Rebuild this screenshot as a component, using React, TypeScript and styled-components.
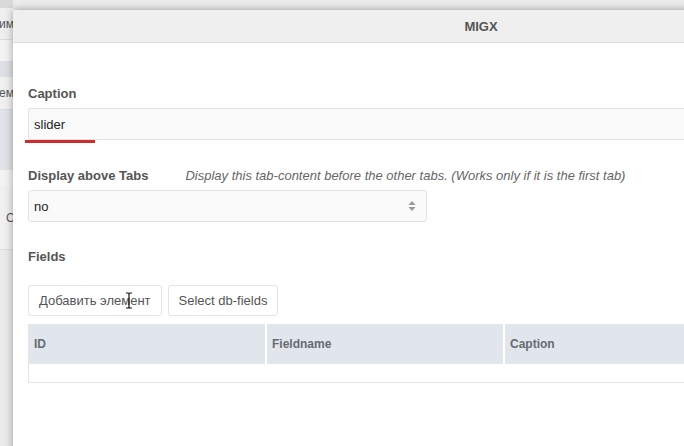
import styled, { createGlobalStyle } from "styled-components";

const GlobalStyle = createGlobalStyle`
    html, body {
        margin: 0;
        padding: 0;
        width: 684px;
        height: 446px;
        overflow: hidden;
        background: #ececec;
        font-family: "Liberation Sans", Arial, sans-serif;
    }
`;

const Screen = styled.div`
    position: relative;
    width: 684px;
    height: 446px;
    overflow: hidden;
    background: #ececec;
`;

// page behind the window, only a sliver of it shows on the left
const BackPage = styled.div`
    display: flex;
    flex-direction: column;
    width: 13px;
    height: 446px;
    background: #ebebeb;
    overflow: hidden;
`;

const BackRow = styled.div<{ h: number; bg: string; line?: boolean }>`
    height: ${({ h }) => h}px;
    flex-shrink: 0;
    background: ${({ bg }) => bg};
    border-bottom: ${({ line }) => (line ? "1px solid #dcdcdc" : "none")};
    display: flex;
    align-items: center;
    font-size: 12px;
    color: #555;
    white-space: nowrap;
    overflow: hidden;
    box-sizing: border-box;
`;

const BackText = styled.span<{ shift: number }>`
    margin-left: ${({ shift }) => shift}px;
`;

const Window = styled.div`
    position: absolute;
    left: 13px;
    top: 10px;
    width: 936px;
    height: 460px;
    background: #fff;
    box-shadow: 0 0 8px rgba(0, 0, 0, 0.35);
    display: flex;
    flex-direction: column;
`;

const WindowHeader = styled.div`
    height: 33px;
    background: #efefef;
    border-bottom: 1px solid #dedede;
    display: flex;
    align-items: center;
    justify-content: center;
    font-size: 13px;
    font-weight: bold;
    color: #555;
    box-sizing: border-box;
`;

const Body = styled.div`
    padding: 43px 15px 0 15px;
    display: flex;
    flex-direction: column;
`;

const LabelRow = styled.div`
    display: flex;
    align-items: baseline;
    gap: 37px;
    height: 16px;
    margin-bottom: 6px;
`;

const Label = styled.label`
    font-size: 13px;
    font-weight: bold;
    color: #555;
`;

const Hint = styled.span`
    font-size: 13px;
    font-style: italic;
    color: #666;
`;

const TextInput = styled.div`
    position: relative;
    height: 32px;
    box-sizing: border-box;
    background: #fafafa;
    border: 1px solid #e2e2e2;
    border-radius: 2px;
    display: flex;
    align-items: center;
    padding-left: 5px;
    font-size: 13px;
    color: #222;
`;

const FocusBar = styled.div`
    position: absolute;
    left: -4px;
    bottom: -4px;
    width: 70px;
    height: 3px;
    background: #d02b2b;
`;

const Section = styled.div<{ top: number }>`
    margin-top: ${({ top }) => top}px;
`;

const Select = styled.div`
    width: 399px;
    height: 32px;
    box-sizing: border-box;
    background: #fafafa;
    border: 1px solid #e2e2e2;
    border-radius: 3px;
    display: flex;
    align-items: center;
    justify-content: space-between;
    padding: 0 10px 0 5px;
    font-size: 13px;
    color: #222;
`;

const Toolbar = styled.div`
    display: flex;
    gap: 6px;
    margin-top: 20px;
    position: relative;
`;

const Button = styled.button`
    height: 31px;
    padding: 0 10px;
    background: #fff;
    border: 1px solid #e4e4e4;
    border-radius: 3px;
    font-family: "Liberation Sans", Arial, sans-serif;
    font-size: 13px;
    color: #555;
`;

const Cursor = styled.svg`
    position: absolute;
    left: 97px;
    top: 7px;
`;

const Grid = styled.div`
    margin-top: 8px;
    border: 1px solid #e4e4e4;
    border-top: none;
`;

const GridHead = styled.div`
    display: grid;
    grid-template-columns: 236px 236px 1fr;
    gap: 2px;
    background: #fff;
`;

const HeadCell = styled.div`
    height: 40px;
    background: #e1e6ec;
    display: flex;
    align-items: center;
    padding-left: 5px;
    font-size: 12px;
    font-weight: bold;
    color: #666b72;
`;

const GridEmpty = styled.div`
    height: 18px;
    background: #fff;
`;

export default function App() {
    return (
        <Screen>
            <GlobalStyle />
            <BackPage>
                <BackRow h={8} bg="#d9d9d9" />
                <BackRow h={32} bg="#efefef" line>
                    <BackText shift={-1}>им</BackText>
                </BackRow>
                <BackRow h={21} bg="#f3f3f3" />
                <BackRow h={16} bg="#dde0e4" />
                <BackRow h={33} bg="#f0f0f0" line>
                    <BackText shift={-1}>ем</BackText>
                </BackRow>
                <BackRow h={60} bg="#e0e3e7" />
                <BackRow h={16} bg="#f3f3f3" />
                <BackRow h={64} bg="#f0f0f0" line>
                    <BackText shift={6}>С</BackText>
                </BackRow>
                <BackRow h={196} bg="#ebebeb" />
            </BackPage>

            <Window>
                <WindowHeader>MIGX</WindowHeader>
                <Body>
                    <LabelRow>
                        <Label>Caption</Label>
                    </LabelRow>
                    <TextInput>
                        slider
                        <FocusBar />
                    </TextInput>

                    <Section top={28}>
                        <LabelRow>
                            <Label>Display above Tabs</Label>
                            <Hint>Display this tab-content before the other tabs. (Works only if it is the first tab)</Hint>
                        </LabelRow>
                        <Select>
                            no
                            <svg width="8" height="12" viewBox="0 0 8 12">
                                <path d="M4 1 L7.5 5 L0.5 5 Z" fill="#999" />
                                <path d="M4 11 L7.5 7 L0.5 7 Z" fill="#999" />
                            </svg>
                        </Select>
                    </Section>

                    <Section top={27}>
                        <LabelRow>
                            <Label>Fields</Label>
                        </LabelRow>
                        <Toolbar>
                            <Button>Добавить элемент</Button>
                            <Button>Select db-fields</Button>
                            <Cursor width="8" height="17" viewBox="0 0 8 17">
                                <path d="M1 1 H3 Q4 1 4 2.5 V14.5 Q4 16 3 16 H1 M7 1 H5 Q4 1 4 2.5 M4 14.5 Q4 16 5 16 H7" stroke="#111" strokeWidth="1.2" fill="none" />
                            </Cursor>
                        </Toolbar>
                        <Grid>
                            <GridHead>
                                <HeadCell>ID</HeadCell>
                                <HeadCell>Fieldname</HeadCell>
                                <HeadCell>Caption</HeadCell>
                            </GridHead>
                            <GridEmpty />
                        </Grid>
                    </Section>
                </Body>
            </Window>
        </Screen>
    );
}
